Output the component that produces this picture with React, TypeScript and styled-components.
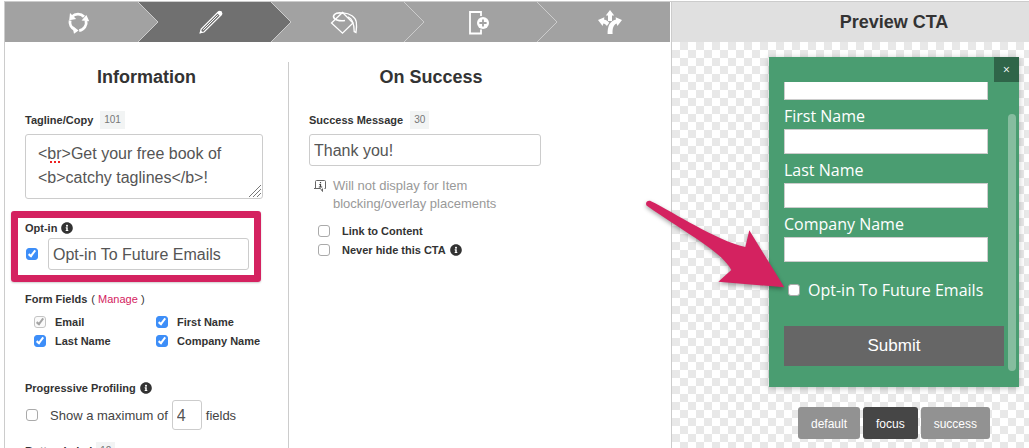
import React from "react";
import styled, { createGlobalStyle, css } from "styled-components";
import { FaInfoCircle } from "react-icons/fa";

const sans = `"Liberation Sans", Arial, Helvetica, sans-serif`;
const pink = "#d42260";

const GlobalStyle = createGlobalStyle`
  *, *::before, *::after { box-sizing: border-box; }
  body { margin: 0; background: #fff; color: #333; font-family: ${sans}; overflow: hidden; }
  h2, p { margin: 0; }
  input, textarea, button { font-family: inherit; margin: 0; }
`;

const Page = styled.div`
  height: 100vh;
  padding: 1px 0 0 4px;
  overflow: hidden;
`;

const Shell = styled.main`
  display: grid;
  grid-template-columns: minmax(0, 667fr) minmax(0, 358fr);
  height: 100%;
  border-top: 1px solid #ccc;
`;

const Editor = styled.section`
  border-left: 1px solid #ccc;
  min-width: 0;
`;

const Stepper = styled.nav`
  display: flex;
  height: 40px;
  margin-right: 1px;
  background: #a2a2a2;
`;

const StepButton = styled.button<{ $active?: boolean }>`
  position: relative;
  flex: 1;
  display: flex;
  align-items: center;
  justify-content: center;
  padding: 0 0 0 12px;
  border: 0;
  color: #fff;
  background: ${(p) => (p.$active ? "#707070" : "#a2a2a2")};
`;

const Chevron = styled.svg`
  position: absolute;
  top: 0;
  left: 100%;
  z-index: 1;
`;

const Columns = styled.div`
  display: grid;
  grid-template-columns: 284px 284px;
  padding-top: 20px;
`;

const Heading = styled.h2`
  font-size: 18px;
  line-height: 30px;
  text-align: center;
`;

const Column = styled.div<{ $divided?: boolean }>`
  border-right: ${(p) => (p.$divided ? "1px solid #ccc" : "0")};
`;

const ColumnBody = styled.div<{ $right: number }>`
  padding: 19px ${(p) => p.$right}px 0 20px;
`;

const Group = styled.div<{ $top?: number }>`
  position: relative;
  margin-top: ${(p) => p.$top ?? 0}px;
`;

const LabelRow = styled.div<{ $gap: number; $height?: number }>`
  display: flex;
  align-items: center;
  gap: ${(p) => p.$gap}px;
  height: ${(p) => p.$height ?? 16}px;
  font-size: 11px;
  line-height: 16px;
  white-space: nowrap;
`;

const FieldLabel = styled.label`
  font-size: 11px;
  font-weight: bold;
  line-height: 16px;
`;

const Badge = styled.span`
  padding: 0 4px;
  font-size: 10px;
  line-height: 18px;
  color: #777;
  background: #f2f4f4;
`;

const boxed = css`
  display: block;
  width: 100%;
  border: 1px solid #ccc;
  border-radius: 3px;
  background: #fff;
  color: #555;
  font-size: 16px;
  outline: 0;
`;

const TextInput = styled.input`
  ${boxed}
  height: 32px;
  padding: 1px 4px 0;
`;

const TextArea = styled.textarea`
  ${boxed}
  height: 65px;
  margin-top: 5px;
  padding: 7px 12px;
  line-height: 24px;
  resize: none;
  overflow: hidden;
`;

const SpellMark = styled.span`
  position: absolute;
  left: 25px;
  top: 50px;
  width: 10px;
  border-bottom: 2px dotted #e22;
`;

const Grip = styled.svg`
  position: absolute;
  right: 1px;
  bottom: 1px;
`;

const CheckBox = styled.input.attrs({ type: "checkbox" })`
  appearance: none;
  position: relative;
  flex: none;
  width: 12px;
  height: 12px;
  border: 1px solid #aaa;
  border-radius: 3px;
  background: #fff;
  &:checked { background: #3d8ef8; border-color: #3d8ef8; }
  &:checked::after {
    content: "";
    position: absolute;
    left: 3px;
    top: 0;
    width: 4px;
    height: 8px;
    border: solid #fff;
    border-width: 0 2px 2px 0;
    transform: rotate(38deg);
  }
  &:disabled { background: #fafafa; border-color: #c4c4c4; }
  &:disabled::after { border-color: #a4a4a4; }
`;

const Highlight = styled.div`
  position: absolute;
  inset: -9px 2px -12px -14px;
  border: 7px solid ${pink};
  border-radius: 3px;
  box-shadow: 0 1px 2px rgba(0, 0, 0, 0.2);
  pointer-events: none;
`;

const OptInRow = styled.div`
  display: flex;
  align-items: center;
  gap: 10px;
  margin-top: 2px;
  padding: 0 14px 0 1px;
`;

const ManageLink = styled.a`
  color: ${pink};
  text-decoration: none;
`;

const CheckGrid = styled.div`
  display: grid;
  grid-template-columns: 122px 1fr;
  margin: 5px -10px 0 9px;
`;

const CheckItem = styled.label<{ $gap: number }>`
  display: flex;
  align-items: center;
  gap: ${(p) => p.$gap}px;
  height: 19px;
  font-size: 11px;
  font-weight: bold;
  white-space: nowrap;
`;

const MaxRow = styled.div`
  display: flex;
  align-items: center;
  gap: 4px;
  margin-top: 4px;
  padding-left: 1px;
  font-size: 13px;
  line-height: 16px;
  color: #444;
  white-space: nowrap;
  label { padding: 2px 0 0 8px; }
  span { padding-top: 2px; }
  label + input { flex: none; width: 30px; height: 30px; }
`;

const Note = styled.div`
  display: flex;
  gap: 7px;
  margin: 11px 0 8px 4px;
  color: #999;
  font-size: 13px;
  line-height: 18px;
  svg { flex: none; margin-top: 3px; }
`;

const CheckList = styled.div`
  padding-left: 9px;
`;

const Preview = styled.section`
  display: flex;
  flex-direction: column;
  min-width: 0;
  border-left: 1px solid #ccc;
`;

const PreviewTitle = styled.h2`
  padding-left: 87px;
  background: #e0e0e0;
  font-size: 18px;
  line-height: 40px;
  text-align: center;
`;

const Canvas = styled.div`
  flex: 1;
  display: flex;
  flex-direction: column;
  align-items: center;
  padding: 15px 0 0 87px;
  background: conic-gradient(#e8e8e8 25%, #fff 0 50%, #e8e8e8 0 75%, #fff 0) 0 0 / 16px 16px;
`;

const Card = styled.div`
  position: relative;
  width: 250px;
  padding: 25px 15px 15px;
  background: #4a9d71;
  box-shadow: 0 1px 6px rgba(0, 0, 0, 0.25);
  color: #fff;
  font-family: "Open Sans", "Noto Sans", sans-serif;
`;

const CloseButton = styled.button`
  position: absolute;
  top: 0;
  right: 0;
  width: 25px;
  height: 25px;
  padding: 0;
  border: 0;
  background: #2f6549;
  color: #fff;
  font-size: 12px;
  line-height: 25px;
`;

const CardForm = styled.form`
  display: flex;
  flex-direction: column;
  justify-content: flex-end;
  height: 290px;
  padding-bottom: 6px;
  overflow: hidden;
`;

const CardField = styled.label`
  flex: none;
  display: block;
  width: 204px;
  padding-top: 4px;
  font-size: 16px;
  line-height: 25px;
  input {
    display: block;
    width: 100%;
    height: 25px;
    border: 1px solid #ccc;
    background: #fff;
  }
`;

const CardOption = styled.label`
  flex: none;
  display: flex;
  align-items: center;
  gap: 8px;
  margin: 13px 0 21px 4px;
  font-size: 16px;
  line-height: 30px;
  white-space: nowrap;
`;

const Submit = styled.button`
  flex: none;
  height: 40px;
  border: 0;
  background: #666;
  color: #fff;
  font-family: ${sans};
  font-size: 17px;
`;

const ScrollThumb = styled.div`
  position: absolute;
  top: 57px;
  right: 3px;
  bottom: 16px;
  width: 8px;
  border-radius: 4px;
  background: #86bd9f;
`;

const Arrow = styled.svg`
  position: absolute;
  left: -129px;
  top: 138px;
  filter: drop-shadow(0 2px 2px rgba(0, 0, 0, 0.35));
  pointer-events: none;
`;

const States = styled.div`
  display: flex;
  gap: 3px;
  margin-top: 20px;
`;

const StateButton = styled.button<{ $active?: boolean }>`
  height: 32px;
  padding: 2px 13px 0;
  border: 0;
  border-radius: 3px;
  background: ${(p) => (p.$active ? "#464646" : "#929292")};
  color: #fff;
  font-size: 12px;
`;

const RecycleIcon = () => (
  <svg width="24" height="24" viewBox="0 0 24 24" fill="none" stroke="currentColor" strokeWidth="2.8">
    <path d="M6 6.6A8.2 8.2 0 0 1 18 6.8" />
    <path d="M20 10.5A8.2 8.2 0 0 1 13.2 20.6" />
    <path d="M8.8 19.6A8.2 8.2 0 0 1 4.1 10.5" />
    <g fill="currentColor" stroke="none">
      <path d="M4 3 10.2 8.9 3.2 10.2Z" />
      <path d="M15.6 10.4 20.4 5 23.2 11.2Z" />
      <path d="M6.4 15.8 12.6 20.4 8 23.8Z" />
    </g>
  </svg>
);

const PencilIcon = () => (
  <svg width="26" height="26" viewBox="0 0 26 26" fill="none" stroke="currentColor" strokeWidth="1.2">
    <path d="M2.2 23.8 3.2 20 20.2 3A2.2 2.2 0 0 1 23.2 6L6 23Z" />
    <path d="M5.2 20.8 19.8 6.2" strokeWidth="1" />
    <path d="M19 3.9 21 1.7 23.6 2.3 24.5 5 22.2 7.2Z M1.6 24.4 2.6 21.2 4.8 23.4Z" fill="currentColor" stroke="none" />
  </svg>
);

const BucketIcon = () => (
  <svg width="28" height="26" viewBox="0 0 28 26" fill="none" stroke="currentColor" strokeWidth="1.3">
    <path d="M1.5 14 12.5 3.5 23 14 12.5 24.2Z" />
    <path d="M15 11.5C9 12.5 3.5 10.5 3.5 7.2 4 4.5 8 3.2 13 4.2" strokeWidth="1.6" />
    <path d="M13 3.8C20 4.2 25.5 8 26.3 13 26.8 16 26.5 20 26 23.4L24.2 22.5C24.2 16.5 23.5 10 18 7.8" />
  </svg>
);

const AddPageIcon = () => (
  <svg width="24" height="26" viewBox="0 0 24 26" fill="none" stroke="currentColor" strokeWidth="1.8">
    <path d="M16 7V3H5V24.5H16V20.5" />
    <circle cx="18" cy="14" r="6" fill="currentColor" stroke="none" />
    <path d="M18 10.4V17.6M14.4 14H21.6" stroke="#a2a2a2" />
  </svg>
);

const ForkIcon = () => (
  <svg width="26" height="26" viewBox="0 0 26 26" fill="currentColor">
    <path d="M13 1 17.2 6.6H15V12H11V6.6H8.8Z" />
    <path d="M1 11 7.4 8.2 7 10.4C9.4 10.9 11.2 12.2 12.2 13.8L9.9 17C8.8 15.6 7.6 14.9 6.4 14.6L5.6 17Z" />
    <path d="M25 11 18.6 8.2 19 10.4C13 11.8 10.4 17 10.6 25H15.6C15.2 19.2 16.8 15.6 19.6 14.6L20.4 17Z" />
  </svg>
);

const NoteIcon = () => (
  <svg width="13" height="13" viewBox="0 0 13 13" fill="none" stroke="#666">
    <path d="M2.5 8.5V1.5Q2.5 .5 3.5 .5H11.5Q12.5 .5 12.5 1.5V8.5H11.5M1 8.5H7.5L9.5 11.5V8.5" />
    <path d="M7.5 2V3.2M6.3 4.5H7.5V7M5.8 7H9.2" stroke="#444" strokeWidth="1.2" />
  </svg>
);

const steps = [
  { name: "Type", icon: <RecycleIcon /> },
  { name: "Edit", icon: <PencilIcon />, active: true },
  { name: "Style", icon: <BucketIcon /> },
  { name: "Add", icon: <AddPageIcon /> },
  { name: "Placement", icon: <ForkIcon /> },
];

const formFields = [
  { name: "Email", locked: true },
  { name: "First Name" },
  { name: "Last Name" },
  { name: "Company Name" },
];

export default function App() {
  return (
    <Page>
      <GlobalStyle />
      <Shell>
        <Editor>
          <Stepper>
            {steps.map((step, i) => (
              <StepButton key={step.name} $active={step.active} aria-label={step.name}>
                {step.icon}
                {i < steps.length - 1 && (
                  <Chevron width="21" height="40" viewBox="0 0 21 40">
                    <path d="M0 0 20 20 0 40Z" fill={step.active ? "#707070" : "#a2a2a2"} />
                    <path d="M0 0 20 20 0 40" fill="none" stroke="#ccc" />
                  </Chevron>
                )}
              </StepButton>
            ))}
          </Stepper>
          <Columns>
            <Column $divided>
              <Heading>Information</Heading>
              <ColumnBody $right={25}>
                <Group>
                  <LabelRow $gap={7} $height={18}>
                    <FieldLabel htmlFor="tagline">Tagline/Copy</FieldLabel>
                    <Badge>101</Badge>
                  </LabelRow>
                  <TextArea
                    id="tagline"
                    spellCheck={false}
                    defaultValue={"<br>Get your free book of\n<b>catchy taglines</b>!"}
                  />
                  <SpellMark />
                  <Grip width="14" height="14" viewBox="0 0 14 14" stroke="#777">
                    <path d="M1 13 13 1M5 13 13 5M9 13 13 9" />
                  </Grip>
                </Group>
                <Group $top={21}>
                  <LabelRow $gap={4}>
                    <FieldLabel htmlFor="optin">Opt-in</FieldLabel>
                    <FaInfoCircle size={12} />
                  </LabelRow>
                  <OptInRow>
                    <CheckBox defaultChecked aria-label="Enable opt-in" />
                    <TextInput id="optin" defaultValue="Opt-in To Future Emails" />
                  </OptInRow>
                  <Highlight />
                </Group>
                <Group $top={21}>
                  <LabelRow $gap={4}>
                    <b>Form Fields</b>
                    <span>
                      ( <ManageLink href="#manage">Manage</ManageLink> )
                    </span>
                  </LabelRow>
                  <CheckGrid>
                    {formFields.map((f) => (
                      <CheckItem key={f.name} $gap={9}>
                        <CheckBox defaultChecked disabled={f.locked} />
                        {f.name}
                      </CheckItem>
                    ))}
                  </CheckGrid>
                </Group>
                <Group $top={30}>
                  <LabelRow $gap={4}>
                    <b>Progressive Profiling</b>
                    <FaInfoCircle size={12} />
                  </LabelRow>
                  <MaxRow>
                    <CheckBox id="limit" />
                    <label htmlFor="limit">Show a maximum of</label>
                    <TextInput defaultValue="4" aria-label="Maximum fields" />
                    <span>fields</span>
                  </MaxRow>
                </Group>
                <Group $top={12}>
                  <LabelRow $gap={4} $height={18}>
                    <FieldLabel htmlFor="button-label">Button Label</FieldLabel>
                    <Badge>12</Badge>
                  </LabelRow>
                  <TextInput id="button-label" defaultValue="Submit" />
                </Group>
              </ColumnBody>
            </Column>
            <Column>
              <Heading>On Success</Heading>
              <ColumnBody $right={32}>
                <LabelRow $gap={7} $height={18}>
                  <FieldLabel htmlFor="success">Success Message</FieldLabel>
                  <Badge>30</Badge>
                </LabelRow>
                <Group $top={5}>
                  <TextInput id="success" defaultValue="Thank you!" />
                </Group>
                <Note>
                  <NoteIcon />
                  <p>Will not display for Item blocking/overlay placements</p>
                </Note>
                <CheckList>
                  <CheckItem $gap={12}>
                    <CheckBox />
                    Link to Content
                  </CheckItem>
                  <CheckItem $gap={12}>
                    <CheckBox />
                    <LabelRow as="span" $gap={4}>
                      Never hide this CTA <FaInfoCircle size={12} />
                    </LabelRow>
                  </CheckItem>
                </CheckList>
              </ColumnBody>
            </Column>
          </Columns>
        </Editor>
        <Preview>
          <PreviewTitle>Preview CTA</PreviewTitle>
          <Canvas>
            <Card>
              <CardForm onSubmit={(e) => e.preventDefault()}>
                <CardField>
                  <input aria-label="Email" />
                </CardField>
                {["First Name", "Last Name", "Company Name"].map((name) => (
                  <CardField key={name}>
                    {name}
                    <input />
                  </CardField>
                ))}
                <CardOption>
                  <CheckBox />
                  Opt-in To Future Emails
                </CardOption>
                <Submit>Submit</Submit>
              </CardForm>
              <CloseButton aria-label="Close">×</CloseButton>
              <ScrollThumb />
              <Arrow width="150" height="100" viewBox="640 195 150 100" fill={pink}>
                <path d="M646.5 205.5C644.8 202.5 648 199.8 651 201.3C675 213 715 240 745.3 247L749.3 230.3 784.3 287.3 718.3 281.7 731.3 270C721 251 690 236 646.5 205.5Z" />
              </Arrow>
            </Card>
            <States>
              <StateButton>default</StateButton>
              <StateButton $active>focus</StateButton>
              <StateButton>success</StateButton>
            </States>
          </Canvas>
        </Preview>
      </Shell>
    </Page>
  );
}
